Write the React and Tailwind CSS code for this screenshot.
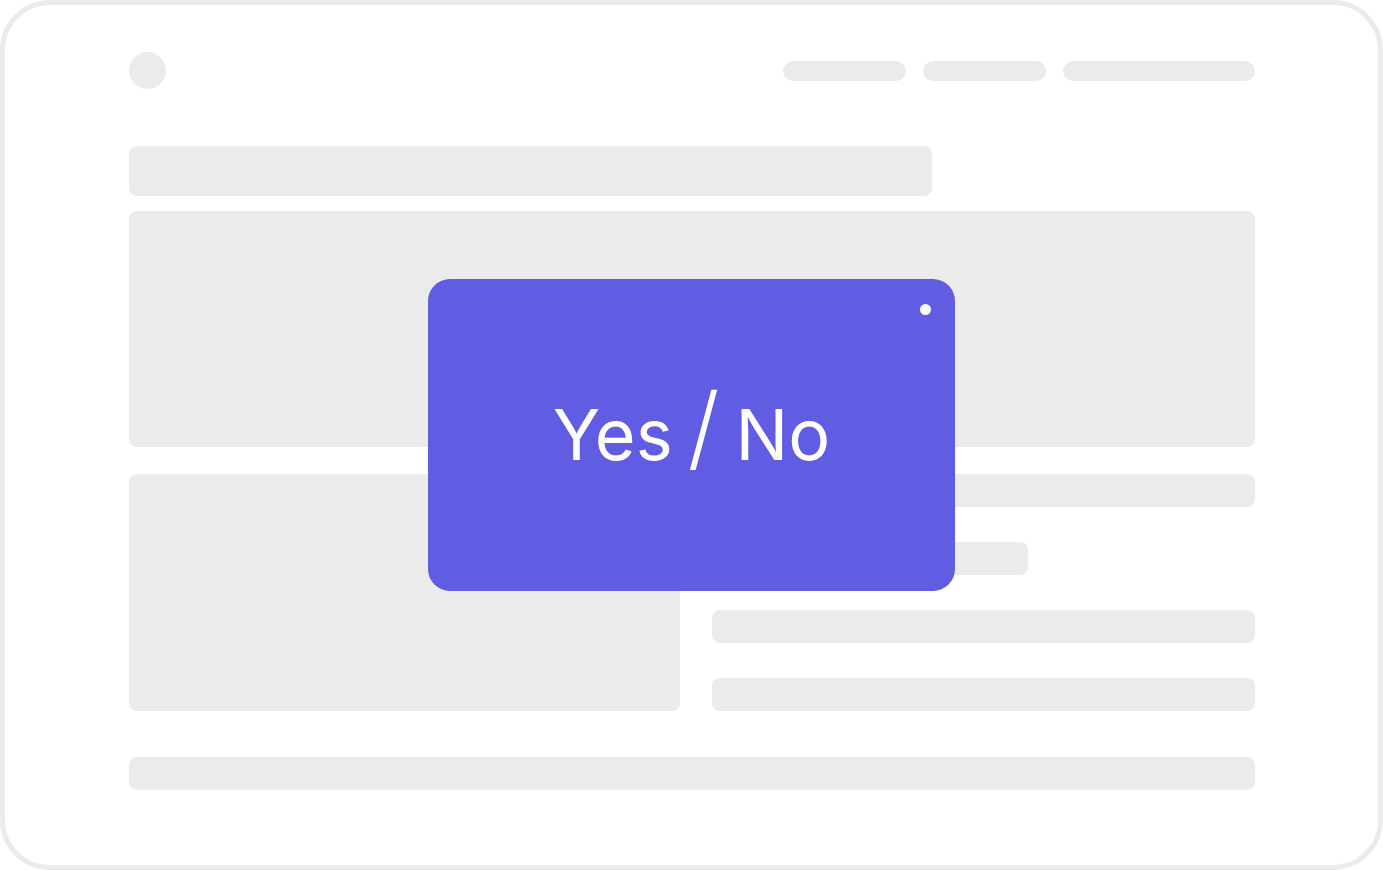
const Bar = ({ className }) => <div className={`bg-[#ebebeb] ${className}`} />;

const App = () => {
  return (
    <div className="w-[1383px] h-[870px] bg-white">
      <div className="relative w-[1383px] h-[870px] border-[5px] border-[#ebebeb] rounded-[50px] bg-white overflow-hidden">
        <div className="ml-[124px] w-[1126px] pt-[47px]">
          {/* header */}
          <div className="flex items-center justify-between h-[37px]">
            <div className="w-[37px] h-[37px] rounded-full bg-[#ebebeb]" />
            <div className="flex items-center gap-[17px] pr-[0px]">
              <Bar className="w-[123px] h-[20px] rounded-full" />
              <Bar className="w-[123px] h-[20px] rounded-full" />
              <Bar className="w-[192px] h-[20px] rounded-full" />
            </div>
          </div>

          <Bar className="mt-[57px] w-[803px] h-[50px] rounded-lg" />
          <Bar className="mt-[15px] w-full h-[236px] rounded-lg" />

          <div className="mt-[27px] flex gap-[32px]">
            <Bar className="w-[551px] h-[237px] rounded-lg" />
            <div className="flex-1 flex flex-col gap-[35px]">
              <Bar className="w-full h-[33px] rounded-lg" />
              <Bar className="w-[316px] h-[33px] rounded-lg" />
              <Bar className="w-full h-[33px] rounded-lg" />
              <Bar className="w-full h-[33px] rounded-lg" />
            </div>
          </div>

          <Bar className="mt-[46px] w-full h-[33px] rounded-lg" />
        </div>

        {/* overlay card */}
        <div className="absolute left-[423px] top-[274px] w-[527px] h-[312px] rounded-[22px] bg-[#605de3] flex items-center justify-center">
          <div className="absolute right-[24px] top-[25px] w-[11px] h-[11px] rounded-full bg-white" />
          <div className="flex items-baseline pb-[16px] text-white font-['Inter',sans-serif] font-normal text-[70px] leading-none">
            <span>Yes</span>
            <span className="ml-[15px] text-[92px] font-light">/</span>
            <span className="ml-[16px]">No</span>
          </div>
        </div>
      </div>
    </div>
  );
};

export default App;
